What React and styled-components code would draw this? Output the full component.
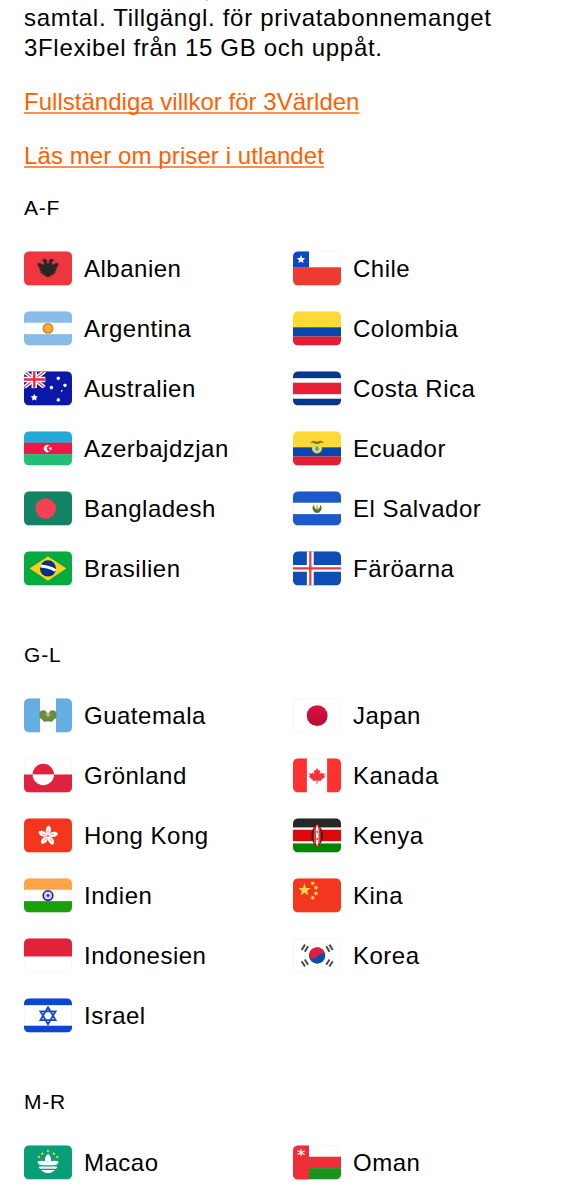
import React from 'react';
import styled, { createGlobalStyle } from 'styled-components';

const GlobalStyle = createGlobalStyle`
  body {
    margin: 0;
    background: #fff;
    color: #000;
    font-family: "Liberation Sans", Arial, Helvetica, sans-serif;
    font-size: 24px;
    line-height: 30px;
    overflow: hidden;
  }
`;

const Page = styled.main`
  width: 562px;
  height: 1200px;
  box-sizing: border-box;
  padding-left: 24px;
  overflow: hidden;
`;

const Descender = styled.div`
  width: 2px;
  height: 1px;
  margin: 0 0 2px 182px;
  background: #ccc;
`;

const Intro = styled.p`
  margin: 0 0 24px;
  white-space: nowrap;
`;

const Line = styled.span`
  display: block;
  letter-spacing: ${(p) => p.$spacing}px;
`;

const LinkRow = styled.p`
  margin: 0 0 24px;

  &:last-of-type {
    margin-bottom: 22px;
  }
`;

const TextLink = styled.a`
  color: #ff5f00;
  letter-spacing: ${(p) => p.$spacing}px;
  text-decoration: underline;
  text-decoration-color: #ff8f4c;
  text-decoration-thickness: 2px;
  text-underline-offset: 2px;
  text-decoration-skip-ink: none;
`;

const Section = styled.section`
  margin-bottom: 42px;
`;

const SectionTitle = styled.h3`
  margin: 0 0 15px;
  font-size: 21px;
  line-height: 30px;
  font-weight: 400;
  letter-spacing: 0.8px;
`;

const Columns = styled.div`
  display: grid;
  grid-template-columns: 1fr 1fr;
`;

const List = styled.ul`
  margin: 0;
  padding: 0;
  list-style: none;
`;

const Country = styled.li`
  display: flex;
  align-items: center;
  gap: 12px;
  height: 60px;
`;

const FlagSvg = styled.svg`
  display: block;
  flex: none;
  width: 48px;
  height: 36px;
`;

const Name = styled.span`
  padding-top: 2px;
  letter-spacing: 0.5px;
`;

const star = (cx, cy, r, inner = 0.42, n = 5, rot = 0) =>
  Array.from({ length: n * 2 }, (_, i) => {
    const a = -Math.PI / 2 + rot + (i * Math.PI) / n;
    const d = i % 2 ? r * inner : r;
    return `${(cx + d * Math.cos(a)).toFixed(2)},${(cy + d * Math.sin(a)).toFixed(2)}`;
  }).join(' ');

const Star = ({ x, y, r, inner, n, rot, fill = '#fff' }) => (
  <polygon points={star(x, y, r, inner, n, rot)} fill={fill} />
);

const Bands = ({ rows }) =>
  rows.map(([y, h, fill]) => <rect key={y} y={y} width="28" height={h} fill={fill} />);

const Fill = ({ c }) => <rect width="28" height="20" fill={c} />;

const flags = {
  al: (
    <>
      <Fill c="#ef363e" />
      <path
        fill="#262626"
        stroke="#262626"
        strokeWidth="0.4"
        strokeLinejoin="round"
        d="M14 7.6 13.1 6.6 13.5 5.6 12.4 4.5 11 4.9 10.9 5.7 12 6 11.7 7.5 11.2 8.1 9.3 7 8.1 7.2 8.3 8.6 9.5 9 8.8 9.9 9.9 10.3 9.2 11.4 10.4 11.6 9.8 12.7 11.2 12.6 11 13.8 12.3 13.4 12.6 14.6 13.2 14.4 14 15.2 14.8 14.4 15.4 14.6 15.7 13.4 17 13.8 16.8 12.6 18.2 12.7 17.6 11.6 18.8 11.4 18.1 10.3 19.2 9.9 18.5 9 19.7 8.6 19.9 7.2 18.7 7 16.8 8.1 16.3 7.5 16 6 17.1 5.7 17 4.9 15.6 4.5 14.5 5.6 14.9 6.6Z"
      />
    </>
  ),
  ar: (
    <>
      <Bands rows={[[0, 6.67, '#88bbe8'], [13.33, 6.67, '#88bbe8']]} />
      <circle cx="14" cy="10" r="2.7" fill="#f4b32e" stroke="#db7b2b" strokeWidth="0.9" />
    </>
  ),
  au: (
    <>
      <Fill c="#0a17a7" />
      <clipPath id="jack"><path d="M0 0H12.7V8.6L11 10H0Z" /></clipPath>
      <g clipPath="url(#jack)">
        <path d="M-1-.8 13 10.2M13-.8-1 10.2" stroke="#fff" strokeWidth="2.3" />
        <path d="M-1-.8 13 10.2M13-.8-1 10.2" stroke="#f5364a" strokeWidth="0.7" />
        <path d="M6 0V10M0 4.8H12.5" stroke="#fff" strokeWidth="3.2" />
        <path d="M6 0V9.6M0 4.8H12.2" stroke="#f5263f" strokeWidth="1.4" />
      </g>
      <Star x={6} y={15.3} r={2.1} inner={0.55} />
      <Star x={20} y={4.1} r={1.2} n={7} inner={0.7} />
      <Star x={23.9} y={8.2} r={1.2} n={7} inner={0.7} />
      <Star x={16} y={9.5} r={1.2} n={7} inner={0.7} />
      <Star x={20} y={16.7} r={1.2} n={7} inner={0.7} />
      <circle cx="22" cy="11.4" r="0.5" fill="#fff" />
    </>
  ),
  az: (
    <>
      <Bands rows={[[0, 6.8, '#24aad6'], [6.67, 6.8, '#f21646'], [13.33, 6.67, '#21bf75']]} />
      <path fill="#fff" d="M15 8.5A2.1 2.1 0 1 0 15 11.7 1.6 1.6 0 1 1 15 8.5Z" />
      <Star x={15.4} y={10.1} r={1.05} n={8} inner={0.6} />
    </>
  ),
  bd: (
    <>
      <Fill c="#128363" />
      <circle cx="12.65" cy="10.1" r="6" fill="#f53f55" />
    </>
  ),
  br: (
    <>
      <Fill c="#05ab41" />
      <path d="M14 3.2 24.3 10 14 16.9 3.7 10Z" fill="#fdd216" stroke="#fdd216" strokeWidth="0.5" strokeLinejoin="round" />
      <circle cx="14" cy="10" r="4.7" fill="#053087" />
      <path d="M9.6 8.6Q14.5 8.9 18.4 11.2" fill="none" stroke="#fff" strokeWidth="1.7" />
    </>
  ),
  cl: (
    <>
      <rect y="9.33" width="28" height="10.67" fill="#ec3b30" />
      <rect width="9.33" height="9.4" fill="#0d48c4" />
      <Star x={4.67} y={4.8} r={2.6} inner={0.45} />
    </>
  ),
  co: <Bands rows={[[0, 9.4, '#ffd936'], [9.33, 5.4, '#0748ae'], [14.67, 5.33, '#de2035']]} />,
  cr: <Bands rows={[[0, 4, '#05378f'], [6.67, 6.67, '#e91f37'], [16, 4, '#05378f']]} />,
  ec: (
    <>
      <Bands rows={[[0, 9.4, '#ffd936'], [9.33, 5.4, '#0748ae'], [14.67, 5.33, '#de2035']]} />
      <circle cx="14" cy="10" r="2.9" fill="#fbd83b" />
      <path d="M12.7 8.5H15.3V10.3Q15.3 11.7 14 11.7T12.7 10.3Z" fill="#b9d6a0" />
      <path d="M14 8.3 14.8 10A.9.9 0 1 1 13.2 10Z" fill="#2f9ed3" />
      <path d="M10.2 6.8Q11 5.2 12.8 5.6L14 6.3 15.2 5.6Q17 5.2 18 6.8L16.4 6.5 14.8 7.4H13.2L11.6 6.5Z" fill="#8d6b1f" />
    </>
  ),
  sv: (
    <>
      <Bands rows={[[0, 6.67, '#1b5ac7'], [13.33, 6.67, '#1b5ac7']]} />
      <path d="M12 7.8Q10.9 9.6 11.8 11.2 12.8 12.7 14.1 12.7T16.3 11.2Q17.2 9.6 16.1 7.8L15.3 10H12.9Z" fill="#3d7c3c" />
      <path d="M14.1 7.4 15.1 10.6H13.1Z" fill="#e8b92e" />
    </>
  ),
  fo: (
    <>
      <Fill c="#0f4db6" />
      <path d="M10.1 0V20M0 10H28" stroke="#fff" strokeWidth="4" />
      <path d="M10.1 0V20M0 10H28" stroke="#ec3a45" strokeWidth="1.33" />
    </>
  ),
  gt: (
    <>
      <rect width="9.33" height="20" fill="#65ade2" />
      <rect x="18.67" width="9.33" height="20" fill="#65ade2" />
      <path d="M12.6 7.3C10.6 6.2 8.7 7.6 9 9.4 8.7 11 9.5 12 10.5 12.2 11 13.7 13 14.2 14 13.2 15 14.2 17 13.7 17.5 12.2 18.6 12 19.3 11 19 9.4 19.2 7.6 17.3 6.2 15.4 7.3L14 9.3Z" fill="#658f3e" />
      <circle cx="14" cy="9.5" r="1.25" fill="#d2b45d" />
    </>
  ),
  gl: (
    <>
      <rect y="9.45" width="28" height="10.55" fill="#df223e" />
      <path d="M5 9.45A6.25 6.25 0 0 1 17.5 9.45Z" fill="#df223e" />
      <path d="M5 9.45A6.25 6.25 0 0 0 17.5 9.45Z" fill="#fff" />
    </>
  ),
  hk: (
    <>
      <Fill c="#f3371f" />
      {[0, 72, 144, 216, 288].map((a) => (
        <g key={a} transform={`rotate(${a + 5} 14 10.2)`}>
          <path d="M14 9.9C12 8.7 11.7 5.4 14 4.2 16.2 5.4 15.6 8.6 14 9.9Z" fill="#fff" />
          <path d="M13.9 8.4Q13.4 7.5 13.9 6.6" fill="none" stroke="#f3371f" strokeWidth="0.3" />
        </g>
      ))}
    </>
  ),
  in: (
    <>
      <Bands rows={[[0, 6.67, '#ffa44a'], [13.33, 6.67, '#1ba00c']]} />
      <circle cx="14" cy="10.1" r="2.8" fill="#d3d2ee" stroke="#1f1e9c" strokeWidth="0.95" />
      <circle cx="14" cy="10.1" r="0.8" fill="#1f1e9c" />
    </>
  ),
  id: <rect width="28" height="10.6" fill="#e32238" />,
  il: (
    <>
      <Bands rows={[[0, 4, '#0e46d4'], [16, 4, '#0e46d4']]} />
      <path d="M14 5.2 18.4 12.7H9.6ZM14 15.1 9.6 7.6H18.4Z" fill="none" stroke="#1549cf" strokeWidth="1.05" />
    </>
  ),
  jp: (
    <>
      <linearGradient id="sun" x2="0" y2="1">
        <stop stopColor="#d81441" />
        <stop offset="1" stopColor="#bb0831" />
      </linearGradient>
      <circle cx="14.1" cy="10.1" r="6.1" fill="url(#sun)" />
    </>
  ),
  ca: (
    <>
      <rect width="8.1" height="20" fill="#ff3131" />
      <rect x="19.9" width="8.1" height="20" fill="#ff3131" />
      <path d="M14 5.6 15 7.3 15.9 6.9 15.6 9.2 16.8 8.3 17.2 9 18.6 8.8 18.2 10.2 18.7 10.8 16.4 12.6 16.5 13.3 14.3 13V14.8H13.7V13L11.5 13.3 11.6 12.6 9.3 10.8 9.8 10.2 9.4 8.8 10.8 9 11.2 8.3 12.4 9.2 12.1 6.9 13 7.3Z" fill="#f5333a" />
    </>
  ),
  ke: (
    <>
      <Bands rows={[[0, 5.33, '#262626'], [6.67, 6.67, '#dd0808'], [14.67, 5.33, '#038400']]} />
      <ellipse cx="14.1" cy="10" rx="3.3" ry="5.8" fill="#321616" />
      <ellipse cx="14.1" cy="10" rx="2.3" ry="6.6" fill="#cf0a0a" />
      <path d="M14.1 3.8 14.9 6V14.2L14.1 16.4 13.3 14.2V6Z" fill="#fff" />
      <path d="M12.6 5.5V14.7M15.6 5.5V14.7" stroke="#e99b9b" strokeWidth="0.3" />
      <path d="M14.1 7.4V8.5M14.1 11.5V12.6" stroke="#dd0808" strokeWidth="0.7" />
    </>
  ),
  cn: (
    <>
      <Fill c="#f3361f" />
      <Star x={6.7} y={6.9} r={3.8} inner={0.42} fill="#ffdb43" />
      <Star x={11.5} y={2.9} r={1.4} inner={0.55} rot={0.4} fill="#ffdb43" />
      <Star x={13.4} y={5.5} r={1.4} inner={0.55} rot={0.2} fill="#ffdb43" />
      <Star x={13.4} y={8.8} r={1.4} inner={0.55} rot={-0.2} fill="#ffdb43" />
      <Star x={11.5} y={11.4} r={1.4} inner={0.55} rot={-0.4} fill="#ffdb43" />
    </>
  ),
  kr: (
    <>
      <circle cx="14.1" cy="10.1" r="4.75" fill="#104ea3" />
      <path d="M9.5 11.3A4.75 4.75 0 1 1 18.75 9.2C17.6 8.3 15.9 8.5 14.6 10 13 11.9 11 12.1 9.5 11.3Z" fill="#e01d42" />
      <g stroke="#4a4a4a" strokeWidth="1.15">
        <path d="M5 6.8 7 3.7M6.9 7.8 8.8 4.7" />
        <path d="M23.2 6.8 21.2 3.7M21.3 7.8 19.4 4.7" />
        <path d="M5 13.4 7 16.5M6.9 12.4 8.8 15.5" />
        <path d="M23.2 13.4 21.2 16.5M21.3 12.4 19.4 15.5" />
      </g>
    </>
  ),
  mo: (
    <>
      <Fill c="#089e78" />
      {[[8.7, 6.8], [10.7, 4.9], [14, 3.4], [17.4, 4.9], [19.4, 6.8]].map(([x, y]) => (
        <Star key={x} x={x} y={y} r={0.95} inner={0.6} fill="#f6cf1f" />
      ))}
      <path d="M14 5.1Q15.9 6.1 15.8 9.3 18 8.7 20.2 9.6 19.7 11.7 17.4 11.7H10.6Q8.3 11.7 7.8 9.6 10 8.7 12.2 9.3 12.1 6.1 14 5.1Z" fill="#fff" />
      <path d="M8.6 12.4H19.4L18.8 13.7H9.2ZM10 14.4H18Q16.5 16.2 14 16.2T10 14.4Z" fill="#fff" />
    </>
  ),
  om: (
    <>
      <Bands rows={[[6.67, 6.8, '#ef2d37'], [13.33, 6.67, '#1a921c']]} />
      <rect width="9.33" height="20" fill="#ef2d37" />
      <path d="M4.7 2.1V6.3M2.7 3.2 6.8 5.4M6.8 3.2 2.7 5.4" stroke="#fff" strokeWidth="0.7" />
    </>
  ),
};

const Flag = ({ code }) => (
  <FlagSvg viewBox="0 -0.75 28 21" aria-hidden="true">
    <clipPath id={`clip-${code}`}>
      <rect width="28" height="20" rx="3" />
    </clipPath>
    <g clipPath={`url(#clip-${code})`}>
      <rect x="0.25" y="0.25" width="27.5" height="19.5" rx="2.75" fill="#fff" stroke="#f2f2f2" strokeWidth="0.5" />
      {flags[code]}
    </g>
  </FlagSvg>
);

const sections = [
  {
    title: 'A-F',
    columns: [
      [['al', 'Albanien'], ['ar', 'Argentina'], ['au', 'Australien'], ['az', 'Azerbajdzjan'], ['bd', 'Bangladesh'], ['br', 'Brasilien']],
      [['cl', 'Chile'], ['co', 'Colombia'], ['cr', 'Costa Rica'], ['ec', 'Ecuador'], ['sv', 'El Salvador'], ['fo', 'Färöarna']],
    ],
  },
  {
    title: 'G-L',
    columns: [
      [['gt', 'Guatemala'], ['gl', 'Grönland'], ['hk', 'Hong Kong'], ['in', 'Indien'], ['id', 'Indonesien'], ['il', 'Israel']],
      [['jp', 'Japan'], ['ca', 'Kanada'], ['ke', 'Kenya'], ['cn', 'Kina'], ['kr', 'Korea']],
    ],
  },
  { title: 'M-R', columns: [[['mo', 'Macao']], [['om', 'Oman']]] },
];

export default function App() {
  return (
    <Page>
      <GlobalStyle />
      <Descender />
      <Intro>
        <Line $spacing={0.7}>samtal. Tillgängl. för privatabonnemanget</Line>
        <Line $spacing={0.68}>3Flexibel från 15 GB och uppåt.</Line>
      </Intro>
      <LinkRow>
        <TextLink $spacing={0.02}>Fullständiga villkor för 3Världen</TextLink>
      </LinkRow>
      <LinkRow>
        <TextLink $spacing={0.09}>Läs mer om priser i utlandet</TextLink>
      </LinkRow>
      {sections.map(({ title, columns }) => (
        <Section key={title}>
          <SectionTitle>{title}</SectionTitle>
          <Columns>
            {columns.map((items, i) => (
              <List key={i}>
                {items.map(([code, name]) => (
                  <Country key={code}>
                    <Flag code={code} />
                    <Name>{name}</Name>
                  </Country>
                ))}
              </List>
            ))}
          </Columns>
        </Section>
      ))}
    </Page>
  );
}
